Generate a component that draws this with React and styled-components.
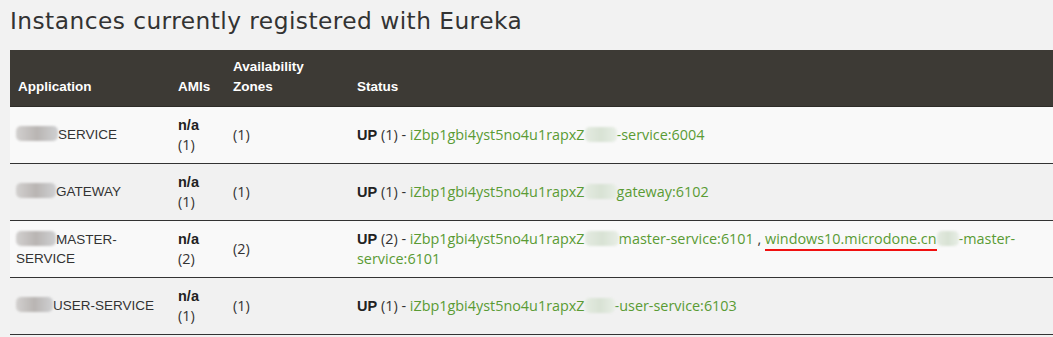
import React from 'react';
import styled, { createGlobalStyle } from 'styled-components';

const GlobalStyle = createGlobalStyle`
	html, body {
		margin: 0;
		padding: 0;
		background: #f2f2f2;
	}
	body {
		font-family: 'Liberation Sans', Arial, sans-serif;
		color: #333;
	}
`;

const instances = [
	{
		app: 'SERVICE',
		blurWidth: 42,
		amis: 1,
		zones: 1,
		up: 1,
		hosts: [{ pre: 'iZbp1gbi4yst5no4u1rapxZ', blur: 32, post: '-service:6004' }],
	},
	{
		app: 'GATEWAY',
		blurWidth: 40,
		amis: 1,
		zones: 1,
		up: 1,
		hosts: [{ pre: 'iZbp1gbi4yst5no4u1rapxZ', blur: 32, post: 'gateway:6102' }],
	},
	{
		app: 'MASTER-SERVICE',
		blurWidth: 40,
		amis: 2,
		zones: 2,
		up: 2,
		hosts: [
			{ pre: 'iZbp1gbi4yst5no4u1rapxZ', blur: 34, post: 'master-service:6101' },
			{ pre: 'windows10.microdone.cn', blur: 22, post: '-master-service:6101', marked: true },
		],
	},
	{
		app: 'USER-SERVICE',
		blurWidth: 37,
		amis: 1,
		zones: 1,
		up: 1,
		hosts: [{ pre: 'iZbp1gbi4yst5no4u1rapxZ', blur: 30, post: '-user-service:6103' }],
	},
];

function App() {
	return (
		<Page>
			<GlobalStyle />
			<Title>Instances currently registered with Eureka</Title>
			<Table>
				<thead>
					<tr>
						<Th $width={160}>Application</Th>
						<Th $width={55}>AMIs</Th>
						<Th $width={124}>Availability Zones</Th>
						<Th>Status</Th>
					</tr>
				</thead>
				<tbody>
					{instances.map((item, i) => (
						<Row key={item.app} $odd={i % 2 === 0}>
							<AppCell>
								<Blur style={{ width: item.blurWidth }} />
								{item.app}
							</AppCell>
							<Td>
								<Bold>n/a</Bold>
								<br />
								<Count>({item.amis})</Count>
							</Td>
							<Td>
								<Count>({item.zones})</Count>
							</Td>
							<Td>
								<Bold>UP</Bold> <Count>({item.up})</Count> -{' '}
								{item.hosts.map((h, j) => (
									<React.Fragment key={j}>
										{j > 0 && ' , '}
										<Link>
											{h.marked ? <Marked>{h.pre}</Marked> : h.pre}
											<Blur $light style={{ width: h.blur }} />
											{h.post}
										</Link>
									</React.Fragment>
								))}
							</Td>
						</Row>
					))}
				</tbody>
			</Table>
		</Page>
	);
}

export default App;

const Page = styled.div`
	padding: 0 0 0 10px;
	overflow: hidden;
`;

const Title = styled.h1`
	margin: 0;
	padding: 7px 0 0 0;
	height: 50px;
	box-sizing: border-box;
	font-family: 'DejaVu Sans', sans-serif;
	font-weight: normal;
	font-size: 23.3px;
	letter-spacing: 0.45px;
	color: #333;
`;

const Table = styled.table`
	width: 1045px;
	border-collapse: collapse;
	font-size: 13.5px;
`;

const Th = styled.th`
	background: #3d3a35;
	border-bottom: 1px solid #2e2c28;
	color: #fff;
	font-weight: bold;
	font-size: 13.5px;
	text-align: left;
	vertical-align: bottom;
	padding: 0 8px 9px 8px;
	height: 56px;
	box-sizing: border-box;
	line-height: 20px;
	width: ${(p) => (p.$width ? `${p.$width}px` : 'auto')};
`;

const Row = styled.tr`
	background: ${(p) => (p.$odd ? '#f9f9f9' : '#f1f1f1')};
	border-bottom: 1px solid #333;
	height: 57px;
`;

const Td = styled.td`
	padding: 8px 8px;
	vertical-align: middle;
	line-height: 19px;
	font-family: 'Open Sans', 'DejaVu Sans', sans-serif;
	font-size: 14.4px;
`;

const AppCell = styled(Td)`
	font-family: 'Liberation Sans', Arial, sans-serif;
	font-size: 13.5px;
	padding-left: 6px;
`;

const Bold = styled.span`
	font-family: 'Liberation Sans', Arial, sans-serif;
	font-weight: bold;
	font-size: 14.5px;
	line-height: 19px;
	color: #222;
`;

const Count = styled.span`
	color: #333;
`;

const Link = styled.span`
	color: #5a9b34;
`;

const Marked = styled.span`
	border-bottom: 2px solid #f01010;
	padding-bottom: 1px;
`;

const Blur = styled.span`
	display: inline-block;
	height: 15px;
	vertical-align: -2px;
	border-radius: 5px;
	background: ${(p) =>
		p.$light
			? 'linear-gradient(90deg, #e4ebe1, #d8e2d4 50%, #e8eee6)'
			: 'linear-gradient(90deg, #d2d0cf, #b9b5b3 50%, #cfd0d2)'};
	filter: blur(1px);
`;
